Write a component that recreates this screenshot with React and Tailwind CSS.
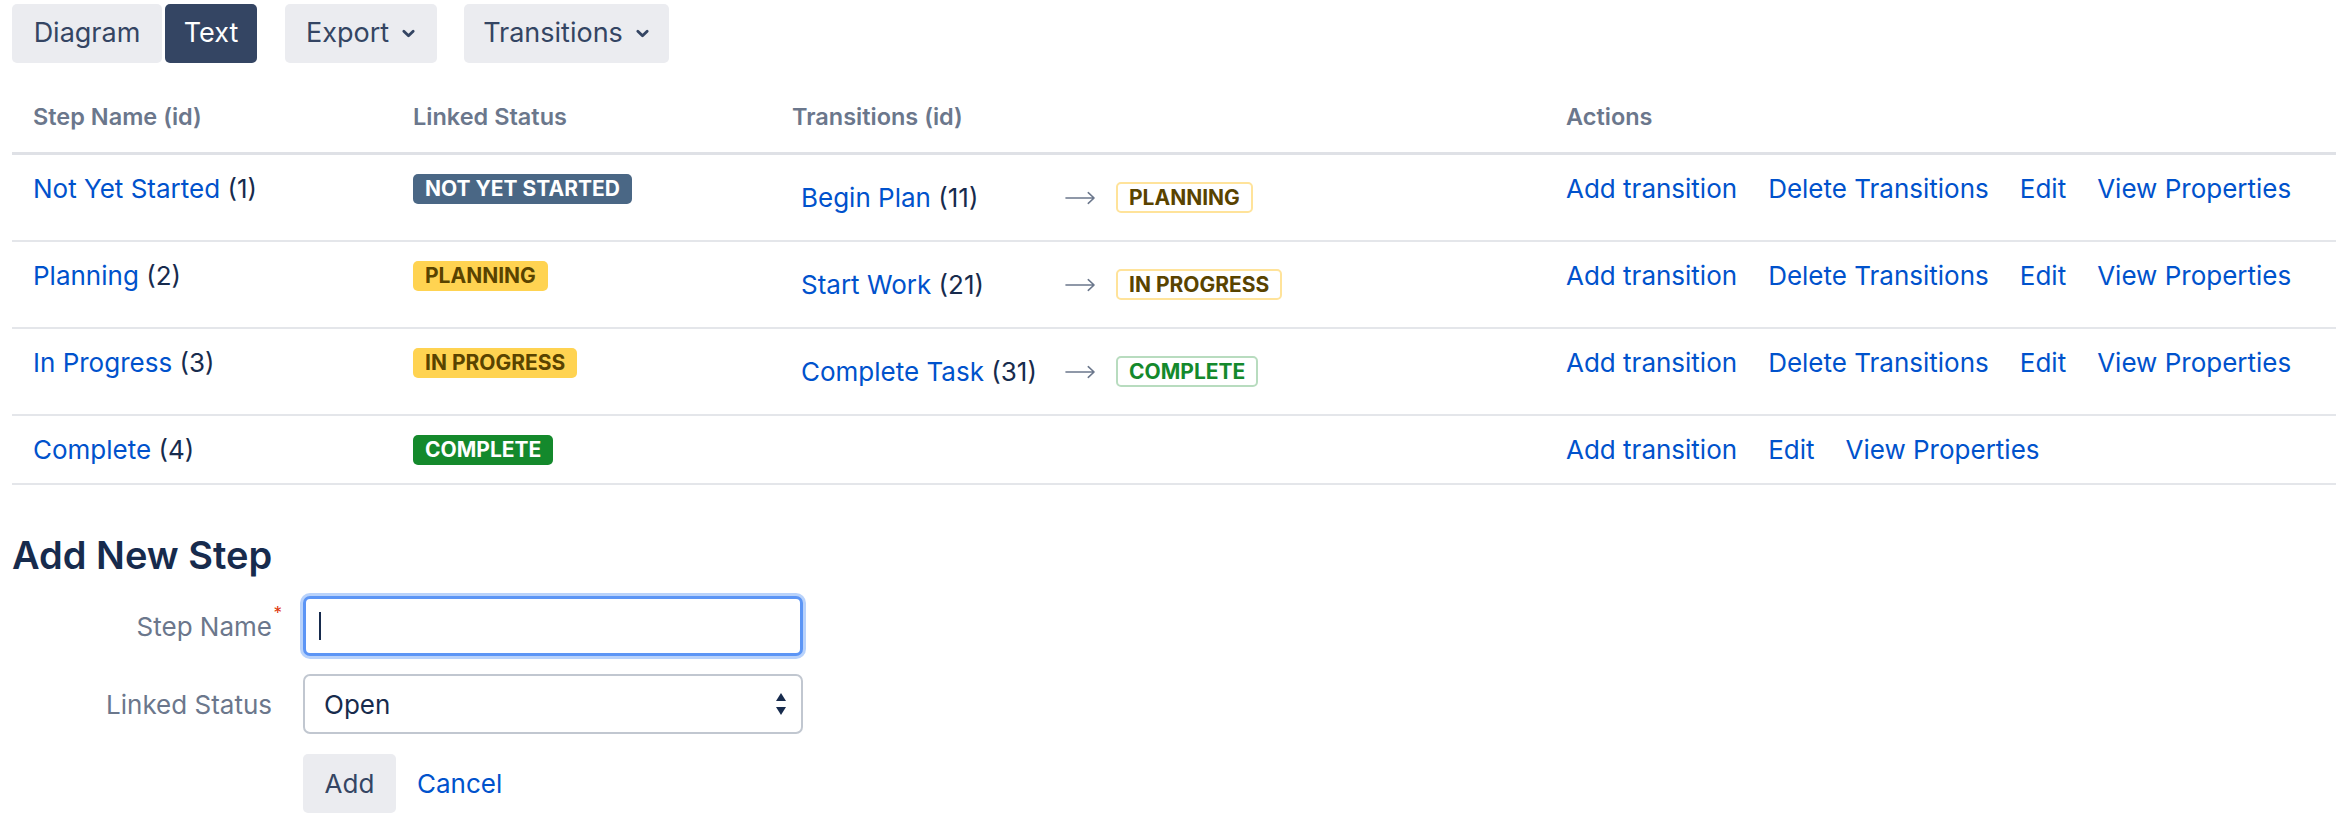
// Workflow steps — text view with the "Add New Step" form underneath.

const steps = [
    {
        id: 1,
        name: "Not Yet Started",
        status: "NOT YET STARTED",
        tone: "navy",
        transitions: [{ id: 11, name: "Begin Plan", to: "PLANNING", tone: "yellow" }]
    },
    {
        id: 2,
        name: "Planning",
        status: "PLANNING",
        tone: "yellow",
        transitions: [{ id: 21, name: "Start Work", to: "IN PROGRESS", tone: "yellow" }]
    },
    {
        id: 3,
        name: "In Progress",
        status: "IN PROGRESS",
        tone: "yellow",
        transitions: [{ id: 31, name: "Complete Task", to: "COMPLETE", tone: "green" }]
    },
    { id: 4, name: "Complete", status: "COMPLETE", tone: "green", transitions: [] }
];

const solidTone = {
    navy: "bg-[#4a6785] text-white",
    yellow: "bg-[#ffd351] text-[#594300]",
    green: "bg-[#14892c] text-white"
};

const subtleTone = {
    yellow: "border-[#ffe39a] text-[#594300]",
    green: "border-[#b8dcbf] text-[#14892c]"
};

const linkClass = "text-[#0052cc] hover:underline cursor-pointer";
const cellClass = "pl-[21px] pt-[20px] pb-[20px]";
const cols = "grid grid-cols-[380px_379px_774px_1fr]";

function Chevron() {
    return (
        <svg viewBox="0 0 16 11" className="ml-[12px] h-[11px] w-[15px]" fill="none">
            <path d="M3 3l5 5 5-5" stroke="currentColor" strokeWidth="3" strokeLinecap="round" strokeLinejoin="round" />
        </svg>
    );
}

function ToolButton({ children, active, className = "" }) {
    return (
        <button
            type="button"
            className={`flex h-[59px] items-center justify-center rounded-[5px] text-[27px] ${
                active ? "bg-[#344563] text-white" : "bg-[#ebecf0] text-[#344563]"
            } ${className}`}
        >
            {children}
        </button>
    );
}

function Lozenge({ children, tone }) {
    return (
        <span
            className={`inline-flex h-[30px] shrink-0 items-center rounded-[5px] px-[12px] text-[21px] font-bold leading-none ${solidTone[tone]}`}
        >
            {children}
        </span>
    );
}

function SubtleLozenge({ children, tone }) {
    return (
        <span
            className={`inline-flex h-[31px] shrink-0 items-center rounded-[5px] border-2 bg-white px-[11px] text-[21px] font-bold leading-none ${subtleTone[tone]}`}
        >
            {children}
        </span>
    );
}

function StepRow({ step }) {
    const hasTransitions = step.transitions.length > 0;
    return (
        <div className={`${cols} border-b-2 border-[#e4e6ea] text-[26px] leading-[27px]`}>
            <div className={cellClass}>
                <a className={linkClass}>{step.name}</a> <span className="text-[#172b4d]">({step.id})</span>
            </div>
            <div className={cellClass}>
                <div className="flex h-[27px] items-center">
                    <Lozenge tone={step.tone}>{step.status}</Lozenge>
                </div>
            </div>
            <div className={`${cellClass} pl-[30px]`}>
                {step.transitions.map((t) => (
                    <div key={t.id} className="flex items-center py-[7px]">
                        <div className="w-[264px]">
                            <a className={linkClass}>{t.name}</a> <span className="text-[#172b4d]">({t.id})</span>
                        </div>
                        <svg viewBox="0 0 32 14" className="h-[14px] w-[31px] text-[#6b778c]" fill="none">
                            <path d="M1 7h29M24 1.5L30 7l-6 5.5" stroke="currentColor" strokeWidth="1.6" strokeLinecap="round" strokeLinejoin="round" />
                        </svg>
                        <div className="ml-[20px]">
                            <SubtleLozenge tone={t.tone}>{t.to}</SubtleLozenge>
                        </div>
                    </div>
                ))}
            </div>
            <div className={`${cellClass} flex gap-[31px] self-start`}>
                <a className={linkClass}>Add transition</a>
                {hasTransitions && <a className={linkClass}>Delete Transitions</a>}
                <a className={linkClass}>Edit</a>
                <a className={linkClass}>View Properties</a>
            </div>
        </div>
    );
}

export default function App() {
    return (
        <div className="min-h-screen bg-white px-[12px] pt-[4px] font-['Inter','Noto_Sans',sans-serif] text-[#172b4d]">
            {/* view switch + dropdowns */}
            <div className="flex items-center">
                <div className="flex gap-[3px]">
                    <ToolButton className="w-[150px]">Diagram</ToolButton>
                    <ToolButton active className="w-[92px]">
                        Text
                    </ToolButton>
                </div>
                <ToolButton className="ml-[28px] w-[152px]">
                    Export
                    <Chevron />
                </ToolButton>
                <ToolButton className="ml-[27px] w-[205px]">
                    Transitions
                    <Chevron />
                </ToolButton>
            </div>

            <div className="mt-[20px]">
                <div className={`${cols} border-b-[3px] border-[#dfe1e6] text-[23.5px] font-semibold leading-[27px] text-[#6b778c]`}>
                    <div className="pl-[21px] pt-[20px] pb-[22px]">Step Name (id)</div>
                    <div className="pl-[21px] pt-[20px] pb-[22px]">Linked Status</div>
                    <div className="pl-[21px] pt-[20px] pb-[22px]">Transitions (id)</div>
                    <div className="pl-[21px] pt-[20px] pb-[22px]">Actions</div>
                </div>
                {steps.map((s) => (
                    <StepRow key={s.id} step={s} />
                ))}
            </div>

            <h2 className="mt-[50px] text-[38px] font-semibold leading-[40px] text-[#172b4d]">Add New Step</h2>

            <form className="mt-[21px] flex flex-col text-[26px]" onSubmit={(e) => e.preventDefault()}>
                <div className="flex h-[60px] items-center">
                    <label className="relative w-[260px] text-right text-[#6b778c]">
                        Step Name
                        <span className="absolute -right-[10px] -top-[6px] text-[17px] text-[#de350b]">*</span>
                    </label>
                    <div className="relative ml-[31px] h-[60px] w-[500px] rounded-[7px] border-[3px] border-[#5c95f5] bg-white shadow-[0_0_0_3px_#b8d2fb]">
                        <input type="text" className="h-full w-full bg-transparent px-[14px] caret-transparent outline-none" />
                        <span className="absolute left-[13px] top-[13px] h-[28px] w-[2px] bg-[#172b4d]" />
                    </div>
                </div>

                <div className="mt-[18px] flex h-[60px] items-center">
                    <label className="w-[260px] text-right text-[#6b778c]">Linked Status</label>
                    <div className="relative ml-[31px] h-[60px] w-[500px] rounded-[7px] border-2 border-[#c1c7d0] bg-white">
                        <select className="h-full w-full appearance-none bg-transparent px-[19px] text-[#172b4d] outline-none">
                            <option>Open</option>
                        </select>
                        <svg viewBox="0 0 12 24" className="pointer-events-none absolute right-[14px] top-[16px] h-[24px] w-[12px]" fill="#172b4d">
                            <path d="M6 1l5 8H1z" />
                            <path d="M6 23l5-8H1z" />
                        </svg>
                    </div>
                </div>

                <div className="mt-[20px] flex h-[59px] items-center pl-[291px]">
                    <button type="submit" className="h-[59px] w-[93px] rounded-[5px] bg-[#ebecf0] text-[#344563]">
                        Add
                    </button>
                    <a className={`ml-[21px] ${linkClass}`}>Cancel</a>
                </div>
            </form>
        </div>
    );
}
